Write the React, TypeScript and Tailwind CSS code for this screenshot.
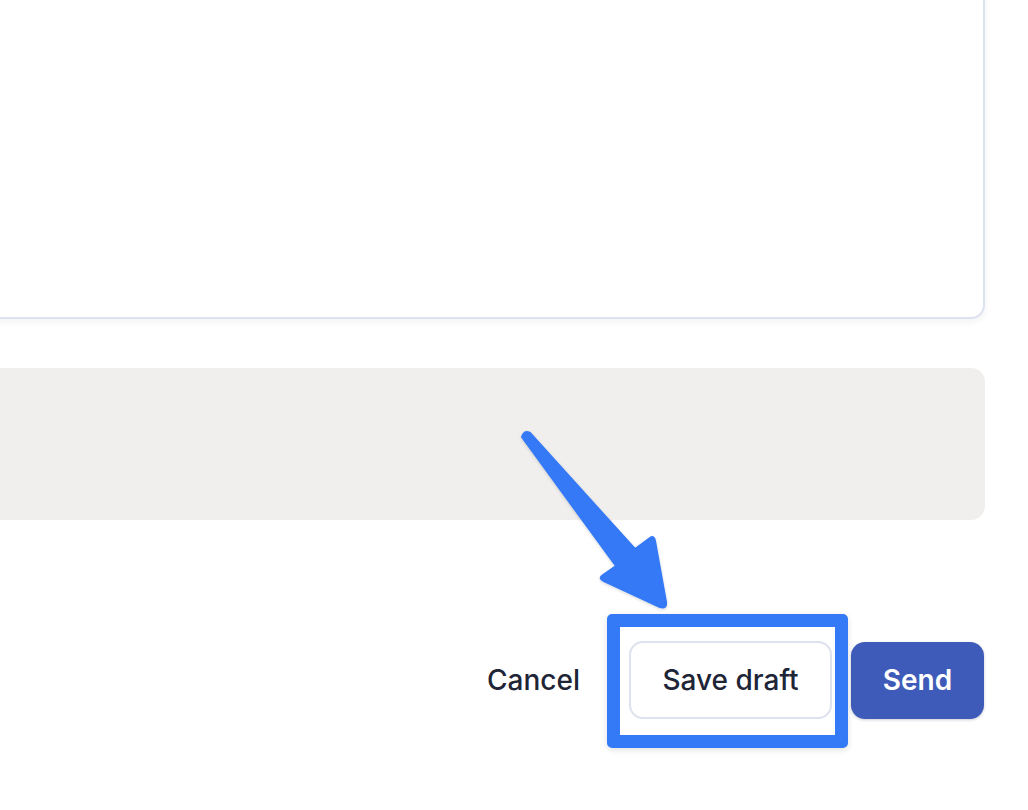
import React from "react";

export default function App() {
  return (
    <div
      className="relative w-[1028px] h-[810px] overflow-hidden bg-white"
      style={{ fontFamily: "Inter, 'Noto Sans', sans-serif" }}
    >
      <div className="flex flex-col pr-[43px] ml-[-20px]">
        <div className="mt-[-20px] h-[339px] rounded-[14px] border-2 border-[#dde2ef] bg-white shadow-[0_3px_6px_rgba(40,50,90,0.06)]" />
        <div className="mt-[49px] h-[152px] rounded-[14px] bg-[#f0efed]" />
        <div className="mt-[121px] mr-[1px] flex items-center justify-end">
          <button className="mr-[49px] text-[28px] font-medium text-[#1e2536] leading-none">
            Cancel
          </button>
          <button className="h-[78px] w-[203px] rounded-[14px] border-2 border-[#dde2ee] bg-white text-[28px] font-medium text-[#1e2536]">
            Save draft
          </button>
          <button className="ml-[19px] h-[77px] w-[133px] rounded-[14px] bg-[#3f5bb9] text-[28px] font-semibold text-white shadow-[0_1px_3px_rgba(40,50,90,0.25)]">
            Send
          </button>
        </div>
      </div>

      {/* highlight box */}
      <div className="absolute left-[607px] top-[614px] h-[134px] w-[241px] rounded-[5px] border-[13px] border-[#3479f6] shadow-[0_2px_6px_rgba(0,0,0,0.12)]" />

      {/* arrow */}
      <svg
        className="absolute left-0 top-0"
        width="1028"
        height="810"
        viewBox="0 0 1028 810"
      >
        <defs>
          <filter id="sh" x="-20%" y="-20%" width="140%" height="140%">
            <feDropShadow dx="0" dy="1" stdDeviation="1.5" floodColor="#000" floodOpacity="0.18" />
          </filter>
        </defs>
        <path
          d="M522 437 Q524 430 530 433 L635 549 L650 538 Q654 535 655 541 L666 602 Q667 609 660 607 L604 581 Q598 578 603 575 L616 566 Z"
          fill="#3479f6"
          stroke="#3479f6"
          strokeWidth="2"
          strokeLinejoin="round"
          filter="url(#sh)"
        />
      </svg>
    </div>
  );
}
